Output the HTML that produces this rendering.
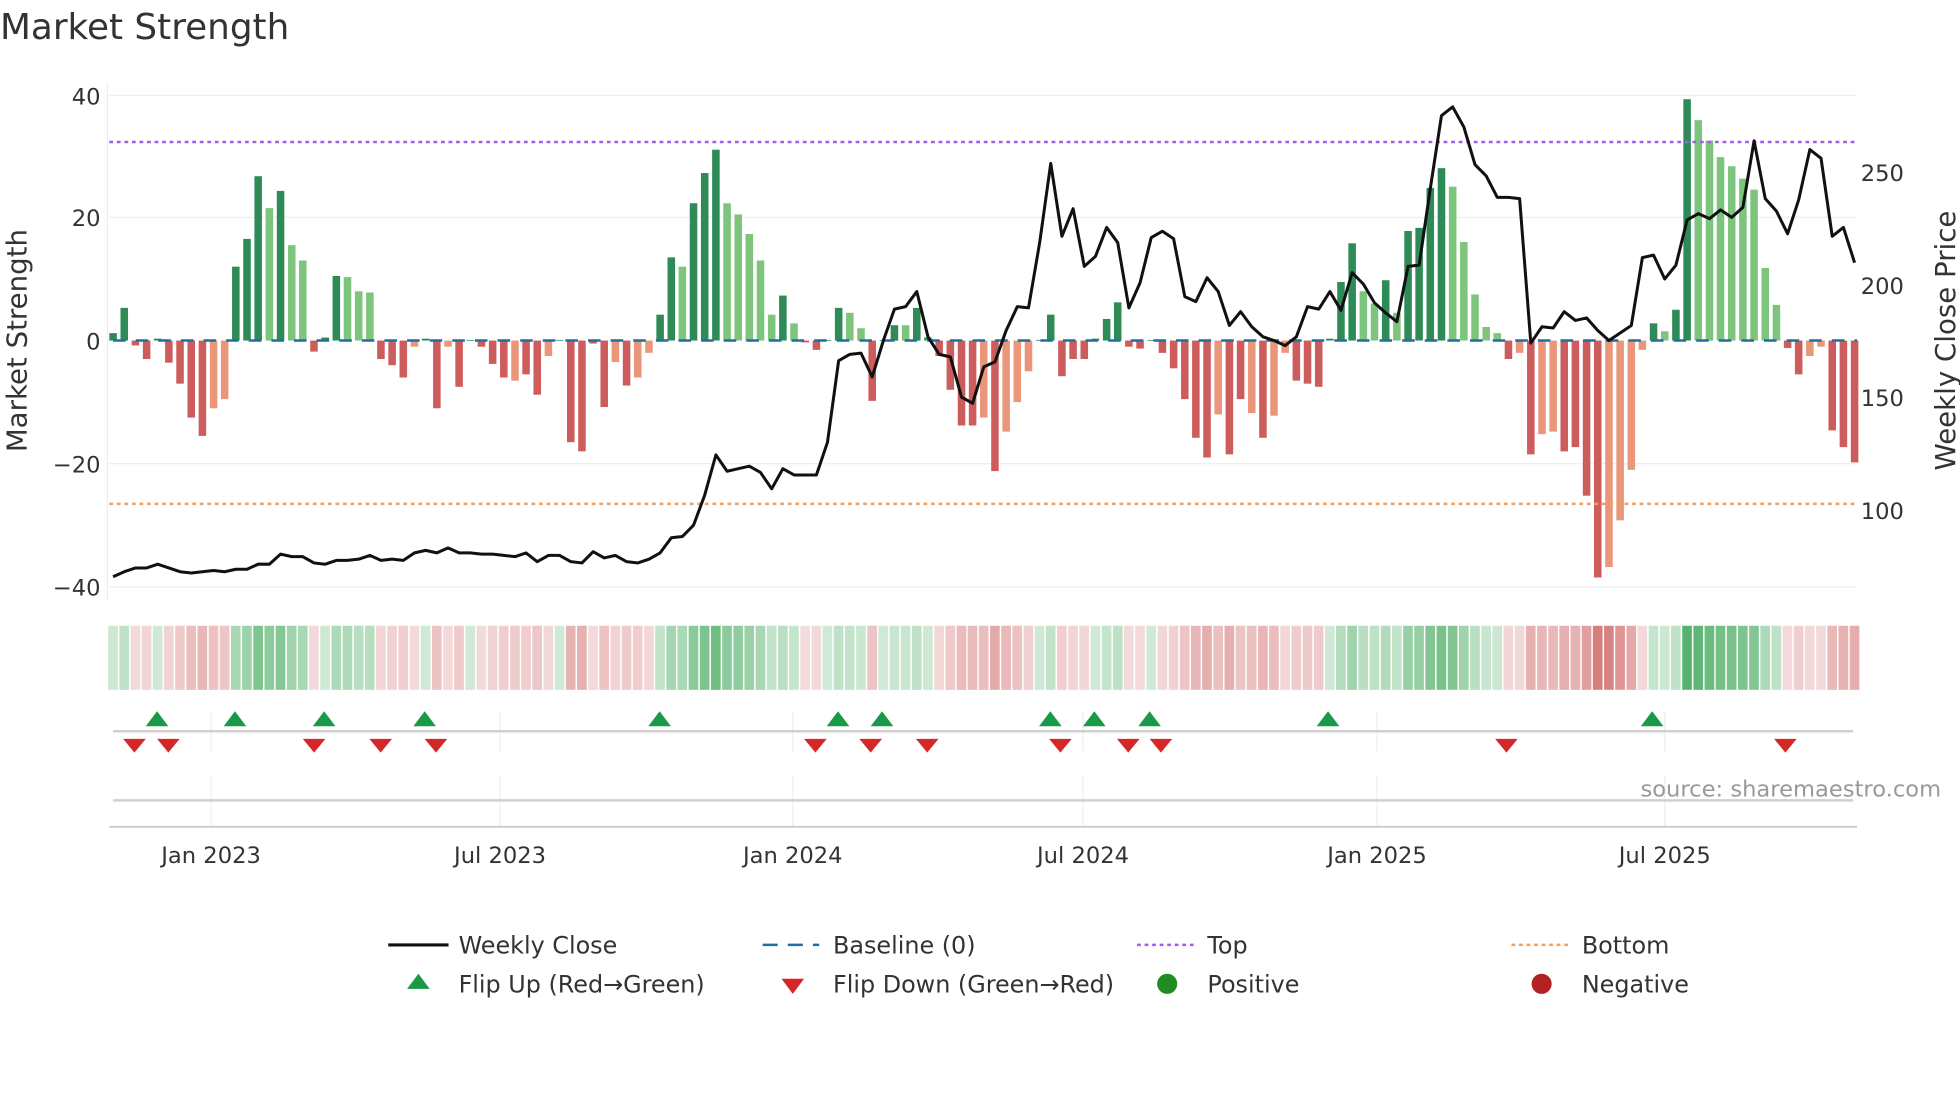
<!DOCTYPE html>
<html><head><meta charset="utf-8"><style>
html,body{margin:0;padding:0;background:#fff;width:1960px;height:1102px;overflow:hidden}
svg{display:block}
text{font-family:"DejaVu Sans","Liberation Sans",sans-serif;fill:#333}
</style></head><body>
<svg id="s" width="1960" height="1102" viewBox="0 0 1560 877" xmlns="http://www.w3.org/2000/svg">
<text x="0" y="31" font-size="28.5">Market Strength</text>
<g stroke="#eceef2" stroke-width="1">
<line x1="87" y1="76" x2="1478" y2="76"/><line x1="87" y1="173" x2="1478" y2="173"/>
<line x1="87" y1="369" x2="1478" y2="369"/><line x1="87" y1="467" x2="1478" y2="467"/>
<line x1="85.5" y1="66" x2="85.5" y2="478"/>
<line x1="168" y1="566" x2="168" y2="598"/><line x1="398" y1="566" x2="398" y2="598"/><line x1="631" y1="566" x2="631" y2="598"/><line x1="862" y1="566" x2="862" y2="598"/><line x1="1096" y1="566" x2="1096" y2="598"/><line x1="1325" y1="566" x2="1325" y2="598"/>
<line x1="168" y1="617" x2="168" y2="658"/><line x1="398" y1="617" x2="398" y2="658"/><line x1="631" y1="617" x2="631" y2="658"/><line x1="862" y1="617" x2="862" y2="658"/><line x1="1096" y1="617" x2="1096" y2="658"/><line x1="1325" y1="617" x2="1325" y2="658"/>
</g>
<g font-size="18" text-anchor="end"><text x="80" y="83">40</text><text x="80" y="180">20</text><text x="80" y="278">0</text><text x="80" y="376">−20</text><text x="80" y="474">−40</text></g>
<g font-size="18"><text x="1481" y="144">250</text><text x="1481" y="234">200</text><text x="1481" y="323">150</text><text x="1481" y="413">100</text></g>
<text transform="translate(21,271) rotate(-90)" font-size="22" text-anchor="middle">Market Strength</text>
<text transform="translate(1556,271) rotate(-90)" font-size="22" text-anchor="middle">Weekly Close Price</text>
<g id="bars"></g>
<line x1="90" y1="271" x2="1478" y2="271" stroke="#1f6f9f" stroke-width="2" stroke-dasharray="10,8"/>
<line x1="87" y1="113" x2="1478" y2="113" stroke="#a25ee8" stroke-width="2" stroke-dasharray="3,3"/>
<line x1="87" y1="401" x2="1478" y2="401" stroke="#f0a060" stroke-width="2" stroke-dasharray="3,3"/>
<polyline id="price" fill="none" stroke="#111" stroke-width="2.4" stroke-linejoin="round"/>
<g id="heat"></g>
<line x1="90" y1="582" x2="1475" y2="582" stroke="#d0d0d0" stroke-width="2"/>
<line x1="90" y1="637" x2="1475" y2="637" stroke="#d0d0d0" stroke-width="2"/>
<line x1="87" y1="658" x2="1478" y2="658" stroke="#ccc" stroke-width="1.5"/>
<g id="tri"></g>
<text x="1545" y="634" font-size="18" text-anchor="end" style="fill:#999">source: sharemaestro.com</text>
<g font-size="18" text-anchor="middle"><text x="168" y="687">Jan 2023</text><text x="398" y="687">Jul 2023</text><text x="631" y="687">Jan 2024</text><text x="862" y="687">Jul 2024</text><text x="1096" y="687">Jan 2025</text><text x="1325" y="687">Jul 2025</text></g>
<g font-size="19">
<line x1="309" y1="752" x2="357" y2="752" stroke="#111" stroke-width="2.5"/><text x="365" y="759">Weekly Close</text>
<line x1="607" y1="752" x2="652" y2="752" stroke="#1f6f9f" stroke-width="2" stroke-dasharray="12,8"/><text x="663" y="759">Baseline (0)</text>
<line x1="905" y1="752" x2="950" y2="752" stroke="#a25ee8" stroke-width="2" stroke-dasharray="3,3"/><text x="961" y="759">Top</text>
<line x1="1203" y1="752" x2="1248" y2="752" stroke="#f0a060" stroke-width="2" stroke-dasharray="3,3"/><text x="1259" y="759">Bottom</text>
<polygon points="324,787 342,787 333,775" fill="#1a9a48"/><text x="365" y="790">Flip Up (Red→Green)</text>
<polygon points="622,779 640,779 631,791" fill="#d62728"/><text x="663" y="790">Flip Down (Green→Red)</text>
<circle cx="929" cy="783" r="8" fill="#228b22"/><text x="961" y="790">Positive</text>
<circle cx="1227" cy="783" r="8" fill="#b22222"/><text x="1259" y="790">Negative</text>
</g>
</svg>
<script>
var B="g1.2 g5.3 r-0.8 r-3 g0.3 r-3.6 r-7 r-12.5 r-15.5 o-11 o-9.5 g12 g16.5 g26.7 G21.5 g24.3 G15.5 G13 r-1.8 g0.5 g10.5 G10.3 G8 G7.8 r-3 r-4 r-6 o-1 g0.3 r-11 o-1 r-7.5 g0.1 r-1 r-3.8 r-6 o-6.5 r-5.5 r-8.8 o-2.5 g0.1 r-16.5 r-18 r-0.5 r-10.8 o-3.5 r-7.3 o-6 o-2 g4.2 g13.5 G12 g22.3 g27.2 g31 G22.3 G20.5 G17.3 G13 G4.2 g7.3 G2.8 r-0.3 r-1.5 g0.1 g5.3 G4.5 G2 r-9.8 g0.1 g2.5 G2.5 g5.3 g0.5 r-2.5 r-8 r-13.8 r-13.8 o-12.5 r-21.2 o-14.8 o-10 o-5 g0.1 g4.2 r-5.8 r-3 r-3 g0.3 g3.5 g6.2 r-1 r-1.3 g0.1 r-2 r-4.5 r-9.5 r-15.8 r-19 o-12 r-18.5 r-9.5 o-11.8 r-15.8 o-12.2 o-2 r-6.5 r-7 r-7.5 g0.3 g9.5 g15.8 G8 G6 g9.8 G4.5 g17.8 g18.3 g24.8 g28 G25 G16 G7.5 G2.2 G1.2 r-3 o-2 r-18.5 o-15.2 o-14.8 r-18 r-17.3 r-25.2 r-38.5 o-36.8 o-29.2 o-21 o-1.5 g2.8 G1.5 g5 g39.2 G35.8 G32.5 G29.8 G28.3 G26.3 G24.5 G11.8 G5.8 r-1.2 r-5.5 o-2.5 o-1 r-14.6 r-17.3 r-19.8".split(" ");
var P=[459,455,452,452,449,452,455,456,455,454,455,453,453,449,449,441,443,443,448,449,446,446,445,442,446,445,446,440,438,440,436,440,440,441,441,442,443,440,447,442,442,447,448,439,444,442,447,448,445,440,428,427,418,394,362,375,373,371,376,389,373,378,378,378,352,287,282,281,300,271,246,244,232,268,282,284,316,321,292,288,263,244,245,193,130,188,166,212,204,181,193,245,225,189,184,190,236,240,221,232,259,248,260,268,271,275,268,244,246,232,247,217,226,241,249,256,212,211,150,92,85,101,131,140,157,157,158,273,260,261,248,255,253,263,271,265,259,205,203,222,211,175,170,174,167,173,165,112,158,168,186,159,119,126,188,181,209];
var C={g:"#2e8b57",G:"#7dc47d",r:"#cd5c5c",o:"#e9967a"};
var st=8.885,h="",hm="",pts=[];
for(var i=0;i<B.length;i++){var t=B[i][0],v=parseFloat(B[i].slice(1)),x=90+i*st;
var y0=271,y1=271-v*4.9;h+='<rect x="'+(x-3).toFixed(1)+'" y="'+Math.min(y0,y1).toFixed(1)+'" width="6" height="'+Math.max(0.6,Math.abs(y1-y0)).toFixed(1)+'" fill="'+C[t]+'"/>';
var a=Math.min(1,Math.abs(v)/40);var col=v>=0?'rgba(65,168,90,'+(0.25+0.65*a).toFixed(2)+')':'rgba(200,80,80,'+(0.2+0.55*a).toFixed(2)+')';
hm+='<rect x="'+(x-4.4+0.5).toFixed(1)+'" y="498" width="'+(st-1.2).toFixed(1)+'" height="51" fill="'+col+'"/>';}
for(var j=0;j<P.length;j++)pts.push((90+j*st).toFixed(1)+","+P[j]);
document.getElementById("bars").innerHTML=h;document.getElementById("heat").innerHTML=hm;
document.getElementById("price").setAttribute("points",pts.join(" "));
var U=[125,187,258,338,525,667,702,836,871,915,1057,1315],D=[107,134,250,303,347,649,693,738,844,898,924,1199,1421],tr="";
U.forEach(function(x){tr+='<polygon points="'+(x-9)+',578 '+(x+9)+',578 '+x+',566" fill="#1a9a48"/>'});
D.forEach(function(x){tr+='<polygon points="'+(x-9)+',588 '+(x+9)+',588 '+x+',599" fill="#d62728"/>'});
document.getElementById("tri").innerHTML=tr;
</script>
</body></html>
